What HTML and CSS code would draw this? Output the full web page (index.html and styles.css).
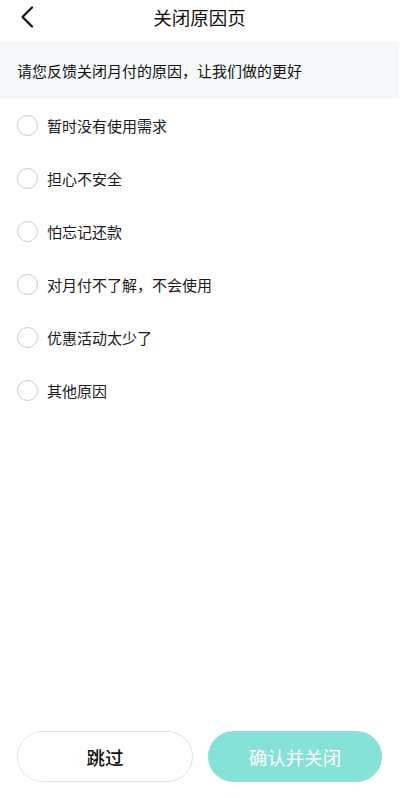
FILE: index.html
```html
<!DOCTYPE html>
<html lang="zh-CN">
<head>
<meta charset="utf-8">
<title>关闭原因页</title>
<link rel="stylesheet" href="styles.css">
</head>
<body>
<div class="page">
  <header class="nav">
    <button class="back" aria-label="返回">
      <svg width="14" height="22" viewBox="0 0 14 22"><path d="M12 1.5 L2.5 11 L12 20.5" fill="none" stroke="#111" stroke-width="2.2" stroke-linecap="round" stroke-linejoin="round"/></svg>
    </button>
    <h1 class="title">关闭原因页</h1>
  </header>
  <div class="banner">请您反馈关闭月付的原因，让我们做的更好</div>
  <ul class="options">
    <li class="option"><span class="radio"></span><span class="label">暂时没有使用需求</span></li>
    <li class="option"><span class="radio"></span><span class="label">担心不安全</span></li>
    <li class="option"><span class="radio"></span><span class="label">怕忘记还款</span></li>
    <li class="option"><span class="radio"></span><span class="label">对月付不了解，不会使用</span></li>
    <li class="option"><span class="radio"></span><span class="label">优惠活动太少了</span></li>
    <li class="option"><span class="radio"></span><span class="label">其他原因</span></li>
  </ul>
  <footer class="actions">
    <button class="btn btn-skip">跳过</button>
    <button class="btn btn-confirm">确认并关闭</button>
  </footer>
</div>
</body>
</html>
```
FILE: styles.css
```css
* { box-sizing: border-box; }
html, body { margin: 0; padding: 0; background: #fff; }
body {
  font-family: "Noto Sans CJK SC", "Noto Sans", sans-serif;
  color: #222;
}
.page {
  width: 399px;
  height: 798px;
  display: flex;
  flex-direction: column;
}
.nav {
  height: 41px;
  position: relative;
  display: flex;
  align-items: center;
  justify-content: center;
}
.back {
  position: absolute;
  left: 19px;
  top: 5px;
  border: 0;
  background: none;
  padding: 0;
  width: 16px;
  height: 24px;
  display: flex;
  align-items: center;
  justify-content: center;
}
.title {
  margin: 0;
  font-size: 18.5px;
  font-weight: 400;
  color: #111;
  line-height: 1;
  transform: translateY(-3px);
}
.banner {
  height: 58px;
  background: #f5f9fa;
  padding-left: 17px;
  display: flex;
  align-items: center;
  font-size: 15px;
  color: #111;
}
.options {
  list-style: none;
  margin: 0;
  padding: 0;
}
.option {
  height: 53px;
  display: flex;
  align-items: center;
  padding-left: 17px;
}
.radio {
  width: 21px;
  height: 21px;
  border: 1.5px solid #cdcdcd;
  border-radius: 50%;
  margin-right: 9px;
  flex: none;
}
.label {
  font-size: 15px;
  color: #1a1a1a;
}
.actions {
  margin-top: auto;
  padding: 0 17px 16px 17px;
  display: flex;
  gap: 15px;
}
.btn {
  flex: 1;
  height: 51px;
  border-radius: 26px;
  font-family: inherit;
  font-size: 18.5px;
  padding: 0;
}
.btn-skip {
  background: #fff;
  border: 1px solid #e3e3e3;
  color: #111;
  font-weight: 500;
}
.btn-confirm {
  background: #86e2d6;
  border: 0;
  color: #fff;
}
```
